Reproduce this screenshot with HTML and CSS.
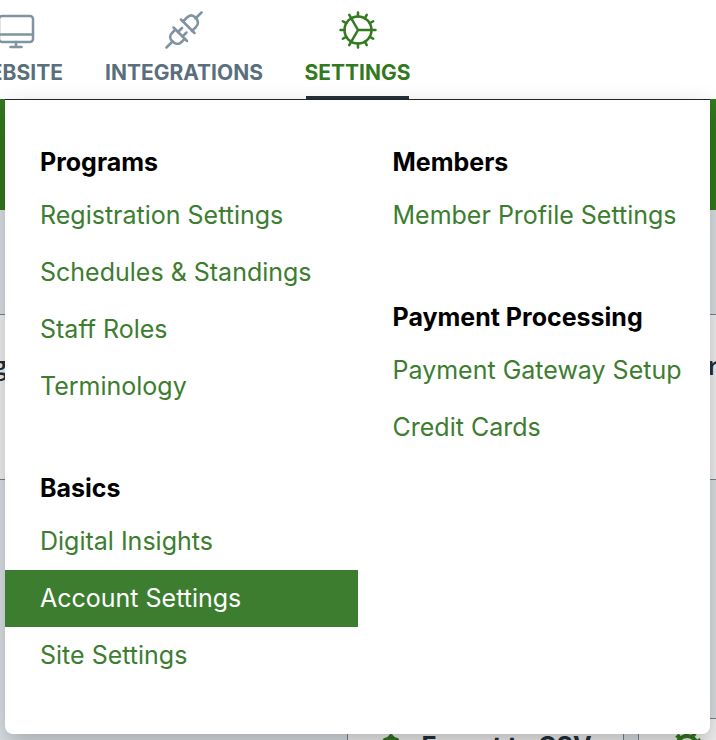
FILE: index.html
```html
<!DOCTYPE html>
<html lang="en">

<head>
  <meta charset="UTF-8">
  <meta name="viewport" content="width=device-width, initial-scale=1.0">
  <title>Settings</title>
  <link rel="stylesheet" href="styles.css">
</head>

<body>
  <header class="topbar">
    <nav class="tabs">
      <a class="tab" href="#website">
        <svg class="tab-icon" viewBox="0 0 38 38">
          <rect x="2" y="5" width="34" height="26" rx="3" />
          <path d="M2 23.500h34M19 31v5M13.500 36h11" />
        </svg>
        WEBSITE
      </a>
      <a class="tab" href="#integrations">
        <svg class="tab-icon" viewBox="0 0 38 38">
          <path d="M1.500 36.500l6-6M30.500 7.500l6-6M16 8.500L29.500 22" />
          <path d="M18 10.500l4-4c3-3 6-2.500 8.500 0s3.500 6 .5 9.500l-4 4" />
          <path d="M8.500 16.500L22 30M10.500 18.500l-3.500 3.500c-3 3-2 6 .5 8.500s6 3.500 9 .5l3.500-3.500" />
          <path d="M13 21l4-4M17.500 25.500l4-4" />
        </svg>
        INTEGRATIONS
      </a>
      <a class="tab active" href="#settings">
        <svg class="tab-icon" viewBox="0 0 38 38">
          <circle cx="19" cy="19" r="13.500" />
          <path d="M19 19h17.500M19 19L10.250 3.800M19 19L10.250 34.200" />
          <path d="M19 5.500v-4M25.750 7.300l2-3.500M30.700 12.250l3.500-2M30.700 25.750l3.500 2M25.750 30.700l2 3.500M19 32.500v4M7.300 25.750l-3.500 2M5.500 19h-4M7.300 12.250l-3.500-2" />
        </svg>
        SETTINGS
      </a>
    </nav>

    <div class="menu">
      <div class="menu-column">
        <section>
          <h2>Programs</h2>
          <a href="#registration">Registration Settings</a>
          <a href="#schedules">Schedules &amp; Standings</a>
          <a href="#staff">Staff Roles</a>
          <a href="#terminology">Terminology</a>
        </section>
        <section>
          <h2>Basics</h2>
          <a href="#insights">Digital Insights</a>
          <a class="selected" href="#account">Account Settings</a>
          <a href="#site">Site Settings</a>
        </section>
      </div>
      <div class="menu-column">
        <section>
          <h2>Members</h2>
          <a href="#profile">Member Profile Settings</a>
        </section>
        <section>
          <h2>Payment Processing</h2>
          <a href="#gateway">Payment Gateway Setup</a>
          <a href="#cards">Credit Cards</a>
        </section>
      </div>
    </div>
  </header>

  <main>
    <div class="banner"></div>
    <div class="summary">
      <span>g</span>
      <span>r</span>
    </div>
    <div class="actions">
      <button class="action export" type="button">
        <svg class="action-icon" viewBox="0 0 24 24">
          <path d="M12 22V2M6 6q4-1 6-4 2 3 6 4" />
        </svg>
        Export to CSV
      </button>
      <button class="action" type="button" aria-label="Options">
        <svg class="action-icon gear" viewBox="0 0 32 32">
          <circle cx="16" cy="16" r="10" />
          <circle cx="16" cy="16" r="13" stroke-dasharray="4.200 4" />
        </svg>
      </button>
    </div>
  </main>
</body>

</html>
```

FILE: styles.css
```css
* {
  box-sizing: border-box;
}

body {
  margin: 0;
  height: 100vh;
  overflow: hidden;
  background-color: #dce2e6;
  color: #22303a;
  font-family: Inter, "Open Sans", sans-serif;
}

a {
  text-decoration: none;
}

svg {
  fill: none;
  stroke: currentColor;
  stroke-width: 2.5;
  stroke-linecap: round;
  stroke-linejoin: round;
}

.topbar {
  position: relative;
  height: 99px;
  background-color: white;
}

.tabs {
  display: grid;
  grid-template-columns: 93px 156px 103px;
  gap: 44px;
  height: 100%;
  margin-left: -31px;
}

.tab {
  display: flex;
  flex-direction: column;
  align-items: center;
  gap: 10px;
  padding-top: 11px;
  color: #5a6f7c;
  font-size: 21px;
  font-weight: 700;
  line-height: 28px;
}

.tab-icon {
  width: 38px;
  height: 38px;
  color: #8093a1;
}

.tab.active {
  border-bottom: 3px solid #22303a;
  color: #33791e;
}

.active .tab-icon {
  color: #33791e;
}

/* dropdown */
.menu {
  position: absolute;
  top: 99px;
  left: 5px;
  right: 6px;
  display: grid;
  grid-template-columns: repeat(2, minmax(0, 1fr));
  padding: 37px 0 50px;
  border-top: 1px solid #22272c;
  border-radius: 0 0 8px 8px;
  background-color: white;
  box-shadow: 0 10px 24px rgba(0, 0, 0, 0.25);
}

.menu-column {
  display: flex;
  flex-direction: column;
  gap: 48px;
}

.menu h2 {
  margin: 0;
  padding-left: 35px;
  color: black;
  font-size: 25px;
  font-weight: 700;
  line-height: 50px;
}

.menu a {
  display: block;
  padding-left: 35px;
  color: #3c7d2f;
  font-size: 25px;
  line-height: 57px;
  white-space: nowrap;
}

.menu .selected {
  background-color: #3c7d2f;
  color: white;
}

/* page behind the dropdown */
.banner {
  height: 111px;
  background-color: #33791e;
}

.summary {
  display: flex;
  justify-content: space-between;
  height: 166px;
  margin: 104px -4px 0 -8px;
  border: 1px solid #738699;
  background-color: #f2f2f2;
  font-family: "Open Sans", sans-serif;
  font-size: 26px;
  font-weight: 600;
  line-height: 100px;
}

.actions {
  display: flex;
  justify-content: flex-end;
  gap: 14px;
  margin: 238px -20px 0 0;
}

.action {
  display: flex;
  align-items: center;
  justify-content: center;
  gap: 18px;
  width: 98px;
  height: 56px;
  border: 1px solid #738699;
  background-color: #f2f2f2;
  color: #22303a;
  font: 700 25px Inter, sans-serif;
}

.export {
  width: 277px;
}

.action-icon {
  width: 24px;
  height: 24px;
  color: #33791e;
  stroke-width: 4;
}

.gear {
  width: 32px;
  height: 32px;
  stroke-linecap: butt;
}
```
